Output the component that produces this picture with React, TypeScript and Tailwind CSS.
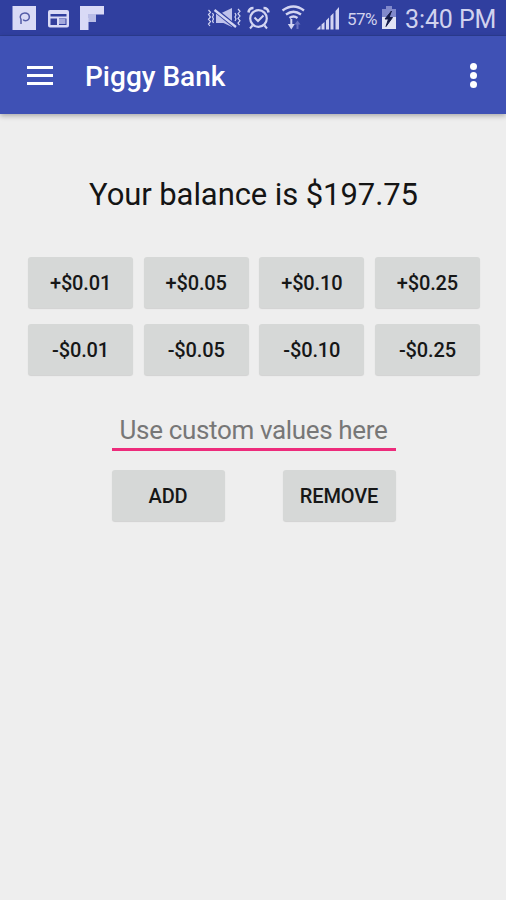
const increments = ["+$0.01", "+$0.05", "+$0.10", "+$0.25"];
const decrements = ["-$0.01", "-$0.05", "-$0.10", "-$0.25"];

function NotificationIcons() {
  return (
    <svg className="ml-3 h-9 w-[94px]" viewBox="12 0 94 36" fill="#d9daf6">
      <path d="M12.5 6h23.5v24H12.5z" />
      <path d="M21 24v-4.5c-2-3 0-6.5 3.700-6.500 6 0 6 7.800.8 7.800-1.300 0-2-.5-2.300-1.300" fill="none" stroke="#555da8" strokeWidth="1.500" />
      <path fillRule="evenodd" d="M50 10h17a2 2 0 0 1 2 2v13.500a2 2 0 0 1-2 2H50a2 2 0 0 1-2-2V12a2 2 0 0 1 2-2zM50.500 14v2.500h16V14zM50.500 18.500V25h6.500v-6.500zM59 18.500V25h7.500v-6.500z" />
      <path d="M51 19h6v6h-6z" fill="#343f9c" />
      <path d="M59 19h6.500v5H59z" fill="#a4a9dc" />
      <path d="M80 6h24v8.500h-8V22h-7.500v8H80z" />
      <path d="M88 14h8v8h-7.500v-4H88z" fill="#b9bde6" />
    </svg>
  );
}

function SystemIcons() {
  return (
    <svg className="h-9 w-[136px]" viewBox="206 0 136 36" fill="none" stroke="#d3d5f2" strokeWidth="1.800">
      {/* muted speaker with vibration marks */}
      <path d="M208.500 10l2 2.300-2 2.300 2 2.400-2 2.300 2 2.300-2 2.400 1.500 2M212.500 13l1 2-1 2 1 2-1 2 1 2M238 9l2 2.300-2 2.400 2 2.300-2 2.400 2 2.300-2 2.400 1.500 2M235 13l1 2-1 2 1 2-1 2" strokeWidth="1.200" />
      <path d="M216 13h5.500L232 8v19l-8.500-4H216z" fill="#bfc2eb" stroke="none" />
      <path d="M214.500 9.500l22 18" stroke="#303f9f" strokeWidth="4.500" />
      <path d="M214.500 10l21.500 17" strokeWidth="2.300" />
      {/* alarm clock */}
      <circle cx="258.500" cy="18.500" r="8.300" strokeWidth="2.200" />
      <path d="M254.500 17.500l3.500 3.500 5.500-5.500M252.500 25.500l-2.500 3M264.500 25.500l2.500 3" strokeWidth="2" />
      <path d="M248.500 12.500c.3-3 2-4.500 5-4.500M263.500 8c3 0 4.700 1.500 5 4.500" strokeWidth="2.600" />
      {/* wifi with transfer arrows */}
      <path d="M282.500 10.500q11-8 21.500 0M286 14.500q7.500-5.500 15 0M289.500 18q4-3 8 0" strokeWidth="2.300" />
      <path d="M291.300 19v6.500" strokeWidth="2" />
      <path d="M287.800 24h7l-3.500 5.500z" fill="#d3d5f2" stroke="none" />
      <path d="M294.500 24.500l3-4 3 4h-2v4.500h-2v-4.500z" fill="#6871c0" stroke="none" />
      {/* cell signal */}
      <g fill="#d3d5f2" stroke="none">
        <path d="M316.500 29.500l4-4v4zM321.500 24.500l3-2.500v7.500h-3zM326 20.500l3-3v12h-3zM330.500 16l3-3v16.500h-3zM335.500 11l3.500-4v22.500h-3.500z" />
      </g>
    </svg>
  );
}

function BatteryIcon() {
  return (
    <svg className="ml-[3px] h-9 w-[15px]" viewBox="381 0 15 36">
      <path d="M386 6h6v3h4v8h-14V9h4z" fill="#8189cb" />
      <path d="M382 17h14v12h-14z" fill="#e2e3f5" />
      <path d="M391.500 11l-6.500 8h3.500l-2.500 7.500 6.500-9H389z" fill="#151b48" stroke="#151b48" strokeWidth="1" />
    </svg>
  );
}

function StatusBar() {
  return (
    <div className="flex h-9 shrink-0 items-center border-b border-[#2c3c91] bg-[#303f9f] text-[#d0d2ee]">
      <NotificationIcons />
      <div className="ml-auto flex h-9 items-center pr-[10px]">
        <SystemIcons />
        <span className="ml-[5px] w-[31px] whitespace-nowrap pt-[3px] text-[17px] leading-5 tracking-[-0.500px]">57%</span>
        <BatteryIcon />
        <span className="ml-[9px] w-[91px] whitespace-nowrap pt-[5px] text-[25px] leading-8 tracking-[-0.100px]">3:40 PM</span>
      </div>
    </div>
  );
}

function Toolbar() {
  return (
    <header className="z-10 flex h-[78px] shrink-0 items-center bg-[#3f51b5] pl-[27px] pr-[29px] text-white shadow-[0_2px_5px_rgba(0,0,0,0.28)]">
      <button aria-label="Menu" className="flex h-[19px] w-[26px] flex-col justify-between">
        <span className="h-[3px] w-full bg-white" />
        <span className="h-[3px] w-full bg-white" />
        <span className="h-[3px] w-full bg-white" />
      </button>
      <h1 className="ml-8 pt-[4px] text-[28px] font-medium leading-8">Piggy Bank</h1>
      <button aria-label="More" className="ml-auto flex flex-col gap-[2px]">
        <span className="size-[7px] rounded-full bg-white" />
        <span className="size-[7px] rounded-full bg-white" />
        <span className="size-[7px] rounded-full bg-white" />
      </button>
    </header>
  );
}

function ActionButton({ label }: { label: string }) {
  return (
    <button className="h-[51px] w-full whitespace-nowrap rounded-[3px] bg-[#d6d8d7] text-[20px] font-medium leading-6 tracking-[-0.150px] text-[#161717] shadow-[0_1px_1px_rgba(0,0,0,0.12)]">
      {label}
    </button>
  );
}

export default function App() {
  return (
    <div className="flex h-[900px] w-[506px] flex-col overflow-hidden bg-[#eeeeee] font-['Roboto',sans-serif]">
      <StatusBar />
      <Toolbar />
      <main className="flex flex-col items-center">
        <p className="ml-[1px] mt-[61px] whitespace-nowrap text-[31px] leading-10 tracking-[-0.080px] text-[#141414]">Your balance is $197.75</p>
        <div className="ml-[2px] mt-[42px] grid w-[452px] grid-cols-4 gap-x-[10.500px] gap-y-4">
          {[...increments, ...decrements].map((label) => (
            <ActionButton key={label} label={label} />
          ))}
        </div>
        <div className="ml-[1px] mt-9 w-[284px]">
          <input
            aria-label="Custom value"
            placeholder="Use custom values here"
            className="block h-[40px] w-full border-b-[3px] border-[#ed2b7b] bg-transparent text-center text-[26px] leading-8 tracking-[-0.350px] outline-none placeholder:text-[#777777]"
          />
          <div className="mt-[19px] grid grid-cols-2 gap-x-[58px]">
            <ActionButton label="ADD" />
            <ActionButton label="REMOVE" />
          </div>
        </div>
      </main>
    </div>
  );
}
